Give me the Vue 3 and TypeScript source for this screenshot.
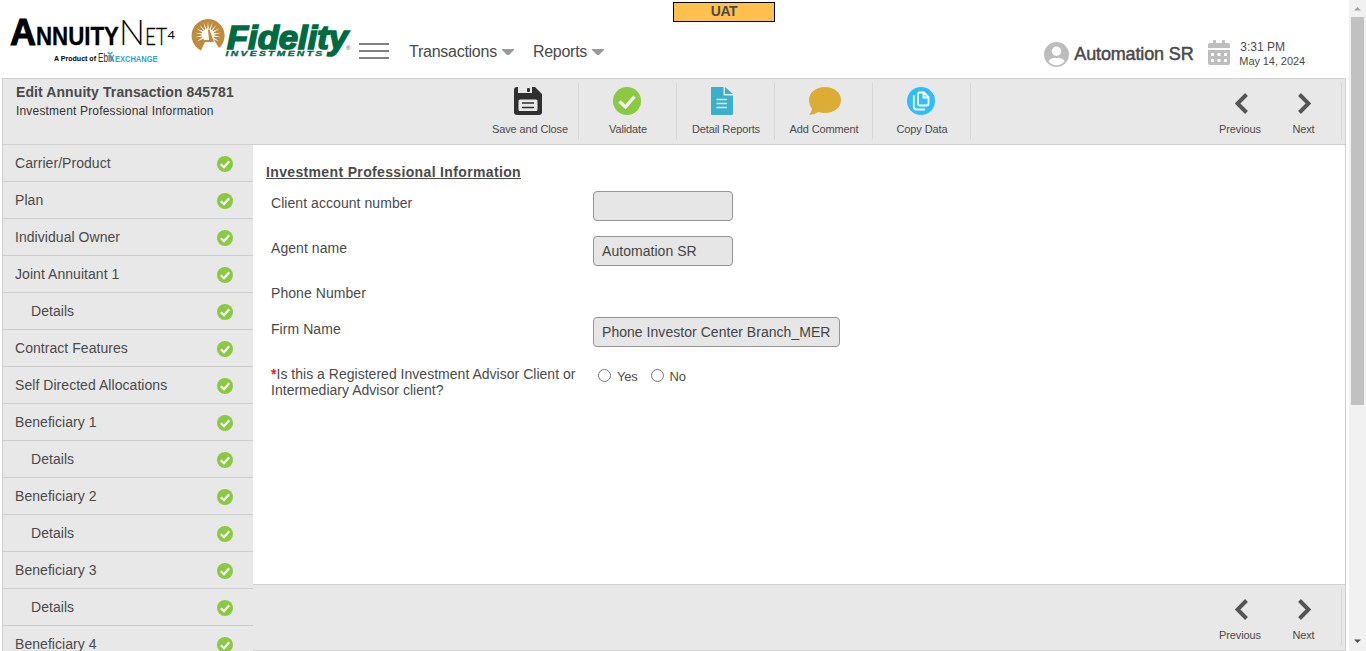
<script setup lang="ts">
interface Step { label: string; child?: boolean }

const steps: Step[] = [
  { label: 'Carrier/Product' },
  { label: 'Plan' },
  { label: 'Individual Owner' },
  { label: 'Joint Annuitant 1' },
  { label: 'Details', child: true },
  { label: 'Contract Features' },
  { label: 'Self Directed Allocations' },
  { label: 'Beneficiary 1' },
  { label: 'Details', child: true },
  { label: 'Beneficiary 2' },
  { label: 'Details', child: true },
  { label: 'Beneficiary 3' },
  { label: 'Details', child: true },
  { label: 'Beneficiary 4' },
]

const actions: { id: string; label: string }[] = [
  { id: 'save', label: 'Save and Close' },
  { id: 'validate', label: 'Validate' },
  { id: 'reports', label: 'Detail Reports' },
  { id: 'comment', label: 'Add Comment' },
  { id: 'copy', label: 'Copy Data' },
]

const menus: string[] = ['Transactions', 'Reports']
const rays: number[] = Array.from({ length: 13 }, (_, i) => i * 20 - 120)
</script>

<template>
  <div class="page">
    <div class="main">
      <header class="header">
        <svg class="annuity" width="170" height="68" viewBox="0 0 170 68">
          <g fill="#000" font-family="'Liberation Sans', Arial, sans-serif">
            <text x="2" y="45" font-size="36" font-weight="700" stroke="#000" stroke-width="1" textLength="26" lengthAdjust="spacingAndGlyphs">A</text>
            <text x="28" y="45" font-size="25" font-weight="700" stroke="#000" stroke-width=".3" textLength="83" lengthAdjust="spacingAndGlyphs">NNUITY</text>
            <text x="111" y="45" font-size="36" font-family="Lato, sans-serif" font-weight="300" textLength="26" lengthAdjust="spacingAndGlyphs">N</text>
            <text x="137" y="45" font-size="23" font-family="Lato, sans-serif" font-weight="300" stroke="#000" stroke-width=".3" textLength="22" lengthAdjust="spacingAndGlyphs">ET</text>
            <text x="159.500" y="39" font-size="12" font-family="Lato, sans-serif" textLength="7.500" lengthAdjust="spacingAndGlyphs">4</text>
            <text x="46" y="61" font-size="7.500" font-weight="700" textLength="42" lengthAdjust="spacingAndGlyphs">A Product of</text>
            <text x="90" y="62" font-size="12.500" fill="#333" textLength="16" lengthAdjust="spacingAndGlyphs">Ebix</text>
            <text x="107" y="62" font-size="9" font-weight="700" fill="#2f9fe0" textLength="42.500" lengthAdjust="spacingAndGlyphs">EXCHANGE</text>
            <path d="M99.500 52l2.500 2 2.500-2M102 54v7M102 56l4 5" fill="none" stroke="#2f9fe0" stroke-width="1.300" />
          </g>
        </svg>
        <svg class="fidelity" width="162" height="42" viewBox="0 0 162 42">
          <path d="M11 33.500A16.500 16.500 0 1 1 29 31L23.500 22h-7z" fill="#bd8a3e" />
          <g fill="#fff">
            <path v-for="angle in rays" :key="angle" d="M16.700 18L18 4.500 19.300 18z" :transform="`rotate(${angle} 18 18)`" />
          </g>
          <circle cx="18" cy="18" r="6" fill="#fff" />
          <path d="M18 20L11 34h16l1-3-5-9z" fill="#fff" />
          <path d="M18 12.500l1.500 0L24 25H13.500l1-2H19z" fill="#bd8a3e" />
          <g font-family="'Liberation Sans', Arial, sans-serif" fill="#006b43">
            <text x="37" y="31.500" font-size="33" font-style="italic" font-weight="700" stroke="#006b43" stroke-width="1.700" textLength="121" lengthAdjust="spacingAndGlyphs">Fidelity</text>
            <text x="35.500" y="39" font-size="6.500" font-style="italic" font-weight="700" stroke="#006b43" stroke-width=".3" letter-spacing="1.500" textLength="99" lengthAdjust="spacingAndGlyphs">INVESTMENTS</text>
            <text x="156" y="33" font-size="6">®</text>
          </g>
        </svg>
        <div class="burger"><i></i><i></i><i></i></div>
        <nav class="menus">
          <span v-for="menu in menus" :key="menu" class="menu">{{ menu }}<svg width="12" height="7" viewBox="0 0 12 7"><path d="M0 0h12v1L7 6H5L0 1z" fill="#999" /></svg></span>
        </nav>
        <div class="account">
          <svg class="avatar" width="25" height="25" viewBox="0 0 25 25">
            <circle cx="12.500" cy="12.500" r="12.500" fill="#bdbdbd" />
            <circle cx="12.500" cy="9.300" r="4.700" fill="#fff" />
            <path d="M4.500 19.500C6 16 9 16 12.500 16s6.500 0 8 3.500A10.500 10.500 0 0 1 4.500 19.500z" fill="#fff" />
          </svg>
          <strong>Automation SR</strong>
          <svg class="calendar" width="22" height="25" viewBox="0 0 22 25">
            <path d="M0 8V5q0-2 2-2h3V1q0-1 1-1h1q1 0 1 1v2h6V1q0-1 1-1h1q1 0 1 1v2h3q2 0 2 2v3zM0 10h22v13q0 2-2 2H2q-2 0-2-2z" fill="#bdbdbd" />
            <path d="M3 13h3v3H3zm6.500 0h3v3h-3zm6.500 0h3v3h-3zM3 19h3v3H3zm6.500 0h3v3h-3zm6.500 0h3v3h-3z" fill="#fff" />
          </svg>
          <div class="clock"><span class="time">3:31 PM</span><span class="date">May 14, 2024</span></div>
        </div>
      </header>

      <div class="frame">
        <div class="toolbar">
          <div class="heading">
            <h1>Edit Annuity Transaction 845781</h1>
            <p>Investment Professional Information</p>
          </div>
          <div class="actions">
            <div v-for="action in actions" :key="action.id" class="action" :class="action.id">
              <svg v-if="action.id === 'save'" width="28" height="28" viewBox="0 0 28 28">
                <path d="M3 0h1v6h14V0h3l7 7v18q0 3-3 3H3q-3 0-3-3V3q0-3 3-3z" fill="#303030" />
                <rect x="13" y="1" width="3" height="4" rx="1" fill="#303030" />
                <rect x="4.500" y="12.500" width="19" height="11.500" rx="1.500" fill="#e8e8e8" />
                <path d="M8 16h12M8 20.500h12" stroke="#303030" stroke-width="1.400" />
              </svg>
              <svg v-else-if="action.id === 'validate'" width="28" height="28" viewBox="0 0 28 28">
                <circle cx="14" cy="14" r="14" fill="#8ac942" />
                <path d="M6.500 14.500l6 5.500 9-10.500" fill="none" stroke="#f2f2f2" stroke-width="3.400" />
              </svg>
              <svg v-else-if="action.id === 'reports'" width="22" height="28" viewBox="0 0 22 28">
                <path d="M1 0h11.500v8.500H22V27q0 1-1 1H1q-1 0-1-1V1q0-1 1-1z" fill="#3ab0cc" />
                <path d="M14 0l8 7h-8z" fill="#3ab0cc" />
                <path d="M5.500 12.500h10.500M5.500 16.500h10.500M5.500 20.500h10.500" stroke="#e8e8e8" stroke-width="1.500" />
              </svg>
              <svg v-else-if="action.id === 'comment'" width="32" height="28" viewBox="0 0 32 28">
                <path d="M16 0c9 0 16 5.500 16 13s-7 13-16 13q-3.500 0-6.500-1Q5 28 0 28q3-4 3-6.500Q0 18 0 13C0 5.500 7 0 16 0z" fill="#dbad35" />
              </svg>
              <svg v-else width="28" height="28" viewBox="0 0 28 28">
                <circle cx="14" cy="14" r="14" fill="#30befb" />
                <path d="M12.500 5.500H17l4.500 4.500v7q0 1.500-1.500 1.500h-7.500q-1.500 0-1.500-1.500V7q0-1.500 1.500-1.500zM16.500 6v4.500H21M6.800 9v10.500q0 3 3 3h7.500" fill="none" stroke="#fff" stroke-width="1.800" stroke-linecap="round" />
              </svg>
              <span>{{ action.label }}</span>
            </div>
          </div>
          <div class="pager">
            <div class="prev"><svg width="13" height="21" viewBox="0 0 13 21"><path d="M11.500 1.500l-9 9 9 9" /></svg><span>Previous</span></div>
            <div class="next"><svg width="13" height="21" viewBox="0 0 13 21"><path d="M1.500 1.500l9 9-9 9" /></svg><span>Next</span></div>
          </div>
        </div>

        <div class="body">
          <aside class="sidebar">
            <div v-for="(step, index) in steps" :key="index" class="step" :class="{ child: step.child }">
              <span>{{ step.label }}</span>
              <svg width="16" height="16" viewBox="0 0 16 16"><circle cx="8" cy="8" r="8" fill="#8ac942" /><path d="M3.800 8.300l3.200 3 5.200-6" fill="none" stroke="#fff" stroke-width="2.100" /></svg>
            </div>
          </aside>
          <div class="workspace">
            <main class="form">
              <h2>Investment Professional Information</h2>
              <div class="row"><label>Client account number</label><input class="short" type="text" value="" readonly></div>
              <div class="row"><label>Agent name</label><input class="short" type="text" value="Automation SR" readonly></div>
              <div class="row phone"><label>Phone Number</label></div>
              <div class="row"><label>Firm Name</label><input class="long" type="text" value="Phone Investor Center Branch_MER" readonly></div>
              <div class="row">
                <label class="question"><b>*</b>Is this a Registered Investment Advisor Client or<br>Intermediary Advisor client?</label>
                <div class="radios">
                  <label><input type="radio" name="advisor"><span>Yes</span></label>
                  <label><input type="radio" name="advisor"><span>No</span></label>
                </div>
              </div>
            </main>
            <footer class="footer">
              <div class="pager">
                <div class="prev"><svg width="13" height="21" viewBox="0 0 13 21"><path d="M11.500 1.500l-9 9 9 9" /></svg><span>Previous</span></div>
                <div class="next"><svg width="13" height="21" viewBox="0 0 13 21"><path d="M1.500 1.500l9 9-9 9" /></svg><span>Next</span></div>
              </div>
            </footer>
          </div>
        </div>
      </div>
    </div>
    <div class="scrollbar">
      <svg width="9" height="5" viewBox="0 0 9 5"><path d="M1 4.500L4.500 1 8 4.500z" fill="#a3a3a3" /></svg>
      <div class="thumb"></div>
      <svg class="down" width="9" height="5" viewBox="0 0 9 5"><path d="M1 .5L4.500 4 8 .5z" fill="#505050" /></svg>
    </div>
    <div class="badge">UAT</div>
  </div>
</template>

<style>
html, body { margin: 0; overflow: hidden; }
</style>

<style scoped>
* { box-sizing: border-box; }
.page { position: relative; display: flex; width: 1366px; height: 651px; overflow: hidden; background: #fff; color: #4a4a4a; font-family: "Liberation Sans", Arial, sans-serif; font-size: 14px; }
.main { width: 1349px; height: 651px; padding: 0 3px 0 2px; display: flex; flex-direction: column; }
.header { height: 78px; flex: none; display: flex; align-items: flex-start; }
.annuity { margin: 0 0 0 6px; }
.fidelity { margin: 17px 0 0 12px; overflow: visible; }
.burger { display: flex; flex-direction: column; gap: 5px; margin: 43px 0 0 7px; }
.burger i { width: 30px; height: 2px; background: #808080; }
.menus { display: flex; gap: 19px; margin: 43px 0 0 20px; font-size: 16px; line-height: 18px; }
.menu { display: flex; align-items: center; gap: 5px; letter-spacing: -.26px; }
.account { display: flex; margin: 38px 41px 0 auto; }
.avatar { margin-top: 4px; }
.account strong { font-size: 18px; line-height: 20px; font-weight: 400; -webkit-text-stroke: .5px #4a4a4a; letter-spacing: -.14px; margin: 6px 0 0 5px; width: 120px; white-space: nowrap; }
.calendar { margin: 2px 0 0 14px; }
.clock { display: flex; flex-direction: column; margin: 2px 0 0 10px; }
.time { font-size: 12px; line-height: 14px; }
.date { font-size: 11px; line-height: 15px; margin-left: -1px; letter-spacing: -.08px; }
.badge { position: absolute; left: 673px; top: 2px; width: 102px; height: 20px; border: 1px solid #000; background: #ffc04d; text-align: center; font-weight: 700; line-height: 17px; letter-spacing: -.4px; }
.frame { flex: 1; display: flex; flex-direction: column; border: solid #d0d0d0; border-width: 1px 1px 0; min-height: 0; }
.toolbar { height: 66px; flex: none; display: flex; border-bottom: 1px solid #d0d0d0; background: #e8e8e8; }
.heading { width: 478px; padding: 4px 0 0 13px; }
h1 { margin: 0; font-size: 14px; line-height: 18px; letter-spacing: .09px; }
.heading p { margin: 2px 0 0; font-size: 12px; line-height: 17px; letter-spacing: .18px; color: #333; }
.actions { display: flex; height: 58px; margin-top: 3px; }
.action { width: 98px; border-right: 1px solid #d8d8d8; border-radius: 2px; display: flex; flex-direction: column; align-items: center; padding: 5px 2px 0 0; }
.action span, .pager span { font-size: 11px; line-height: 14px; white-space: nowrap; letter-spacing: -.12px; }
.action span { margin-top: 7px; padding-left: 3px; }
.save svg { margin-right: 1px; }
.reports svg { margin-right: 6px; }
.comment svg { margin-left: 4px; }
.pager { display: flex; margin: 3px 3px 0 auto; height: 58px; width: 154px; border-right: 1px solid #d8d8d8; border-radius: 2px; }
.pager > div { display: flex; flex-direction: column; align-items: center; padding-top: 11px; }
.pager span { margin-top: 8px; padding-left: 1px; }
.pager path { fill: none; stroke: #555; stroke-width: 4; }
.prev { margin-left: 30px; width: 43px; }
.prev svg { margin-left: 3px; }
.next { margin-left: 30px; width: 24px; }
.next svg { margin-left: 2px; }
.body { display: flex; flex: 1; min-height: 0; }
.sidebar { width: 250px; overflow: hidden; background: #e8e8e8; }
.step { height: 37px; border-bottom: 1px solid #ccc; display: flex; justify-content: space-between; padding: 0 20px 0 12px; }
.step span { line-height: 16px; margin-top: 10px; letter-spacing: .05px; }
.step svg { margin-top: 11px; }
.step.child { padding-left: 28px; }
.workspace { flex: 1; display: flex; flex-direction: column; min-width: 0; }
.form { height: 439px; padding: 19px 0 0 13px; }
h2 { font-size: 14px; line-height: 16px; text-decoration: underline; margin: 0; letter-spacing: .35px; }
.row { height: 45px; display: flex; align-items: flex-start; padding: 0 0 0 5px; }
h2 + .row { margin-top: 11px; }
.row > label { width: 322px; line-height: 16px; padding-top: 4px; letter-spacing: .06px; white-space: nowrap; }
.row > label.question { letter-spacing: .02px; }
.row.phone { height: 36px; }
.question b { color: #f00; font-weight: 400; -webkit-text-stroke: .4px #f00; }
input[type=text] { height: 30px; margin: 0; padding: 0 7px 0 8px; background: #e6e6e6; border: 1px solid #949494; border-radius: 4px; font: 14px "Liberation Sans", Arial, sans-serif; color: #444; letter-spacing: .04px; outline: none; }
.short { width: 140px; }
.long { width: 247px; }
.radios { display: flex; gap: 13px; padding: 7px 0 0 5px; }
.radios label { display: flex; align-items: flex-start; gap: 6px; }
.radios span { font-size: 13px; line-height: 16px; letter-spacing: -.2px; }
.radios input { width: 13px; height: 13px; margin: 0; }
.footer { flex: none; height: 67px; display: flex; background: #e8e8e8; border: solid #d0d0d0; border-width: 1px 0; }
.scrollbar { width: 17px; height: 651px; background: #f1f1f1; display: flex; flex-direction: column; align-items: center; padding-top: 6px; }
.scrollbar svg { flex: none; }
.thumb { width: 13px; height: 388px; margin-top: 6px; background: #c1c1c1; }
.down { margin: auto 0 7px; }
</style>
